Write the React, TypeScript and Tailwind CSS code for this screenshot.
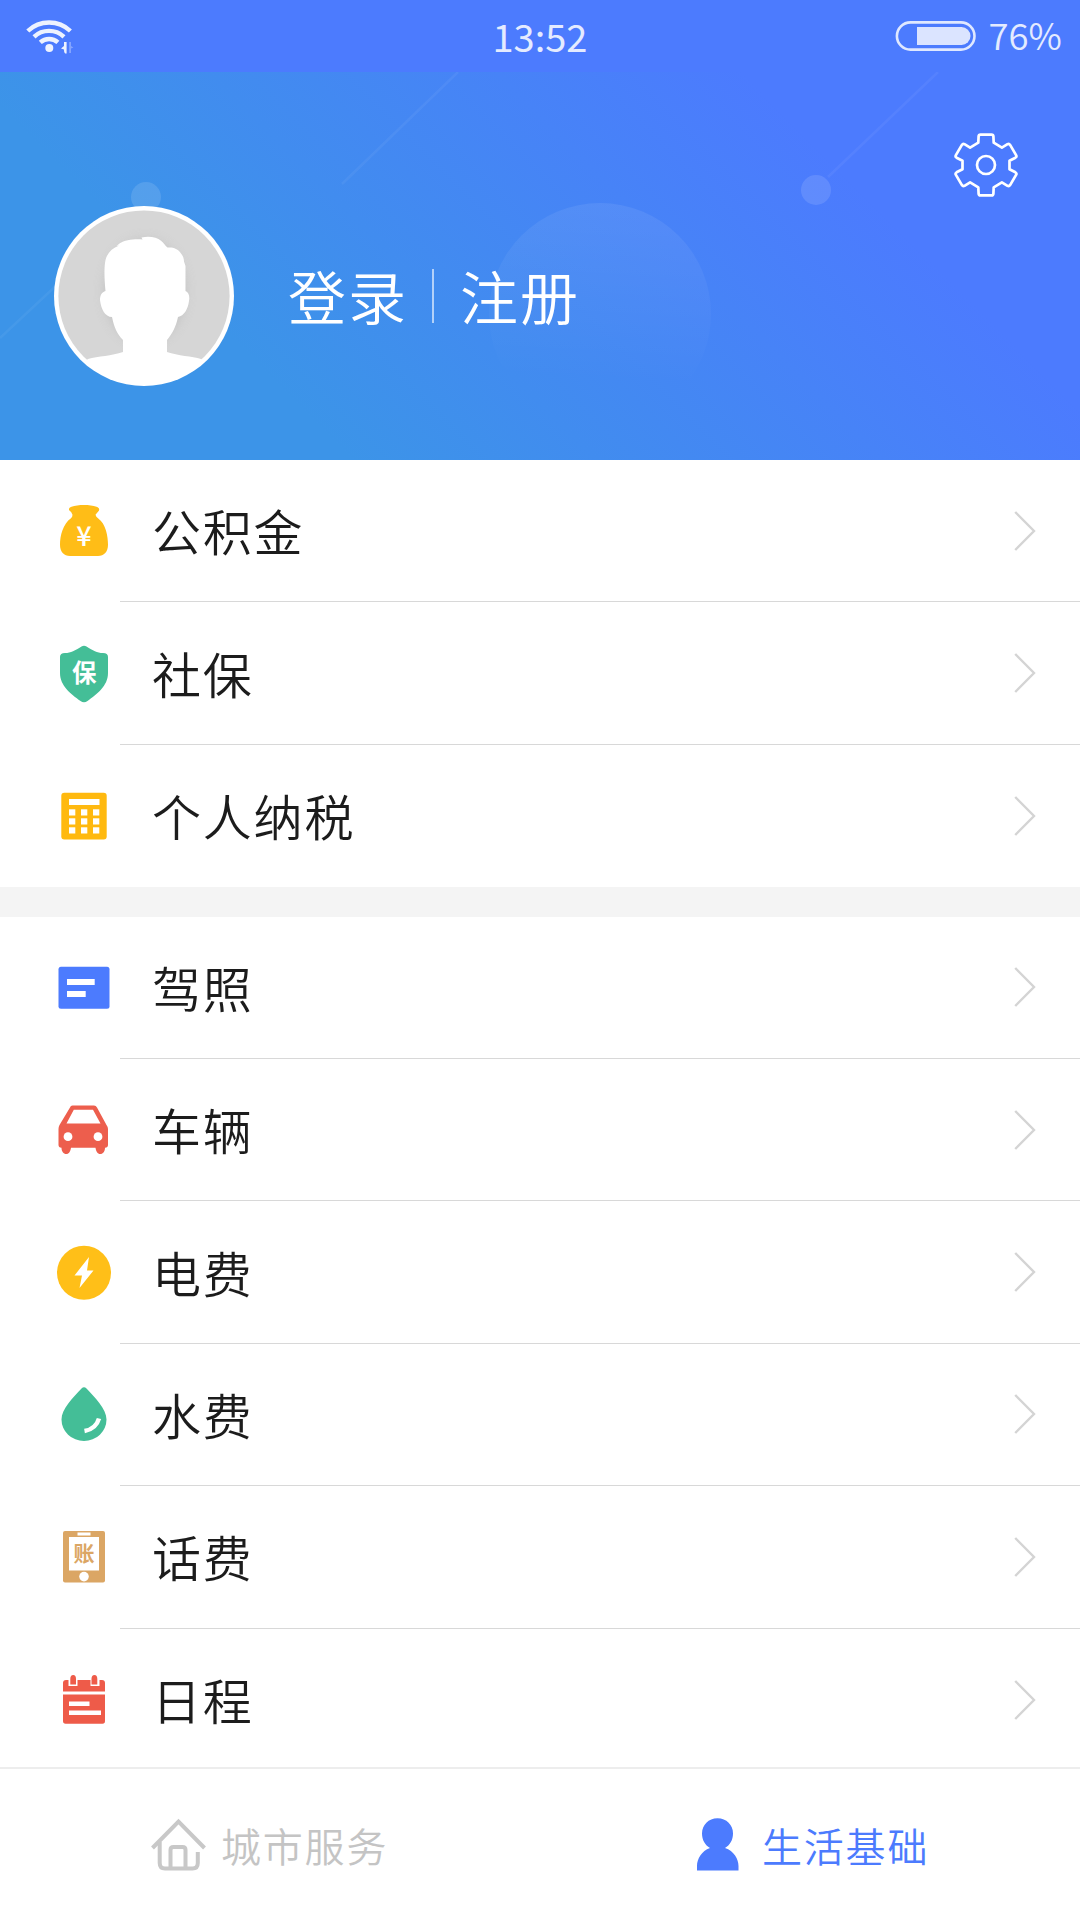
import React from "react";

interface MenuItem {
  label: string;
  icon: React.ReactNode;
}

function WifiIcon() {
  return (
    <svg width="50" height="36" viewBox="0 0 50 36" fill="none" className="opacity-90">
      <g stroke="white" strokeWidth="4.4">
        <path d="M1.8 13a31 31 0 0 1 42.6 0" />
        <path d="M8 18.8a22 22 0 0 1 30 0" />
        <path d="M14.3 24.4a13 13 0 0 1 17.6 0" />
      </g>
      <circle cx="23.3" cy="30" r="4" fill="white" />
      <path d="M35 30.5l3-2.5v-4h2.6v11.4h-1.4c-1-1-1.2-2-1.2-4z" fill="white" />
      <path d="M43.2 24h1.8v4l2.4 1.5-2.4 1V35h-1.8z" fill="white" opacity=".35" />
    </svg>
  );
}

function BatteryIcon() {
  return (
    <svg width="82" height="30" viewBox="0 0 82 30" fill="none">
      <rect x="1.9" y="1.4" width="77.6" height="27.2" rx="13.6" stroke="#dfe8ff" strokeWidth="2.6" />
      <path d="M22 6h44.5a9 9 0 0 1 0 18H22z" fill="#dbe4ff" />
    </svg>
  );
}

function GearIcon() {
  return (
    <svg width="66" height="66" viewBox="-33 -33 66 66" fill="none" stroke="white" strokeWidth="2.7" strokeLinejoin="round">
      <path d="M-5.5-30.4h11q1.8 0 1.9 1.8l.3 6.3 8.2 4.9 5.6-3.4q1.6-.8 2.6.7l6 10.2q.9 1.6-.7 2.6l-5.9 3v8.6l5.9 3q1.6 1 .7 2.6l-6 10.2q-1 1.5-2.6.7l-5.6-3.4-8.2 4.9-.3 6.3q-.1 1.8-1.9 1.8h-11q-1.8 0-1.9-1.8l-.3-6.3-8.2-4.9-5.6 3.4q-1.6.8-2.6-.7l-6-10.2q-.9-1.6.7-2.6l5.9-3v-8.6l-5.9-3q-1.6-1-.7-2.6l6-10.2q1-1.5 2.6-.7l5.6 3.4 8.2-4.9.3-6.3q.1-1.8 1.9-1.8z" />
      <circle r="9" />
    </svg>
  );
}

function HeroDecor() {
  return (
    <svg className="absolute inset-0" width="1080" height="388" viewBox="0 72 1080 388" fill="none">
      <defs>
        <linearGradient id="bubble" x1="0.5" y1="0" x2="0.45" y2="1">
          <stop offset="0" stopColor="white" stopOpacity=".075" />
          <stop offset=".8" stopColor="white" stopOpacity="0" />
        </linearGradient>
      </defs>
      <circle cx="600" cy="314" r="111" fill="url(#bubble)" />
      <circle cx="146" cy="197" r="15" fill="white" fillOpacity=".12" />
      <circle cx="816" cy="190" r="15" fill="white" fillOpacity=".12" />
      <g stroke="white" strokeOpacity=".05" strokeWidth="2.5">
        <path d="M828 177L938 72" />
        <path d="M342 184L458 72" />
        <path d="M0 338L60 282" />
      </g>
    </svg>
  );
}

function Avatar() {
  return (
    <svg width="180" height="180" viewBox="0 0 180 180">
      <defs>
        <clipPath id="avatarClip">
          <circle cx="90" cy="90" r="88" />
        </clipPath>
        <filter id="softShadow" x="-20%" y="-20%" width="140%" height="140%">
          <feGaussianBlur stdDeviation="5" />
        </filter>
      </defs>
      <circle cx="90" cy="90" r="90" fill="white" />
      <circle cx="90" cy="90" r="85.6" fill="#d6d6d6" />
      <g clipPath="url(#avatarClip)">
        <ellipse cx="91" cy="85" rx="42" ry="53" fill="#bdbdbd" opacity=".6" filter="url(#softShadow)" />
        <path
          d="M62.5 40L65.5 37.5C71 34 80 32.8 88.5 33.5L87.5 31.5C95 29.8 103 31.2 107 34.7C110 37 111 39.5 113.5 41.5C119 41 124 42.5 127 47.5C129 50 130 52.5 130 55.5L131.5 60V85C134.5 86 136 90 135 95C134 103 130 110 124 111C122 121 118 128 113 134V146C124 150 138 150 147 153L180 180H0L34 153C44 150 58 150 69 146V134C63 128 60 121 58 111C51 111 47 103 46 94C46 89 48 86 51.5 85C50.5 75 50 64 51 57C52 48 57 43 65 39.5Z"
          fill="white"
        />
      </g>
    </svg>
  );
}

function MoneyBagIcon() {
  return (
    <svg width="54" height="60" viewBox="0 -1.8 54 60">
      <path
        d="M14 9C11 7 11.5 5 14.5 4C21 1.5 33 1.5 39.5 4C42.5 5 43 7 41 9L38.5 12Q39 14 41 15.5C49 21 51 34 51 42C51 49 47 53.3 41 53.3H13C7 53.3 3 49 3 42C3 33 6 21 14 15.5Q15.5 14 15.5 12Z"
        fill="#ffbd17"
      />
      <text x="27" y="43.5" textAnchor="middle" fontSize="27" fill="white" className="font-['Noto_Sans_CJK_SC',sans-serif] font-medium">
        ¥
      </text>
    </svg>
  );
}

function ShieldIcon() {
  return (
    <svg width="54" height="60" viewBox="0 0 54 60">
      <path d="M24.5 2.5Q27 1 29.5 2.5C36 6.5 40 9 46 9Q51 9 51 13V29C51 42 40 50 30.5 57Q27 59.5 23.5 57C14 50 3 42 3 29V13Q3 9 8 9C14 9 18 6.5 24.5 2.5Z" fill="#44be97" />
      <text x="27.3" y="38" textAnchor="middle" fontSize="24.5" fill="white" className="font-['Noto_Sans_CJK_SC',sans-serif] font-bold">
        保
      </text>
    </svg>
  );
}

function CalculatorIcon() {
  return (
    <svg width="54" height="60" viewBox="0 0 54 60">
      <rect x="4.3" y="6.8" width="45.4" height="46.8" rx="3" fill="#ffb90f" />
      <g fill="white">
        <rect x="12" y="13" width="30.5" height="6" />
        {[23.3, 32.3, 41.3].map((y) =>
          [12, 24, 36].map((x) => <rect key={`${x}-${y}`} x={x} y={y} width="6.3" height="6.2" />)
        )}
      </g>
    </svg>
  );
}

function LicenseIcon() {
  return (
    <svg width="54" height="60" viewBox="0 0 54 60">
      <rect x="1.5" y="8.7" width="51" height="42" rx="2.5" fill="#4c7bfe" />
      <path d="M10 21h27.7v6H10zM10 33h18.7v6H10z" fill="white" />
    </svg>
  );
}

function CarIcon() {
  return (
    <svg width="54" height="60" viewBox="0 0 54 60">
      <path
        fillRule="evenodd"
        fill="#ed5e4d"
        d="M13 7.5Q13.6 5.5 15.5 5.5H37Q39 5.5 40 7.5L49.5 25Q51 27 51 29V45Q51 47.5 48 47.7C48 51 46 54 43.3 54C40.5 54 39 51 38.5 47.7H14C13.5 51 12 54 9.3 54C6.5 54 4.5 51 4.5 47.7Q1.5 47.5 1.5 45V29Q1.5 27 2.5 25ZM16.8 9.7L9.5 23.5H43.5L36 9.7Z"
      />
      <circle cx="11" cy="36.7" r="4.4" fill="white" />
      <circle cx="41" cy="36.7" r="4.4" fill="white" />
    </svg>
  );
}

function PowerIcon() {
  return (
    <svg width="54" height="60" viewBox="0 0 54 60">
      <circle cx="27" cy="29.8" r="27" fill="#ffbf18" />
      <path d="M32 14L17.5 32.5H25L22.5 45L36.5 27.5H30Z" fill="white" />
    </svg>
  );
}

function WaterIcon() {
  return (
    <svg width="54" height="60" viewBox="0 0 54 60">
      <path d="M24.5 3.5Q27 1 29.5 3.5C38 12.5 49.5 24 49.5 34.5A22.5 21.5 0 0 1 4.5 34.5C4.5 24 16 12.5 24.5 3.5Z" fill="#44be97" />
      <path d="M42 33.5Q39 44 27.5 46" stroke="white" strokeWidth="4.5" fill="none" />
    </svg>
  );
}

function PhoneBillIcon() {
  return (
    <svg width="54" height="60" viewBox="0 0 54 60">
      <rect x="6" y="4" width="42" height="51.5" rx="2" fill="#dba664" />
      <rect x="20.5" y="5.5" width="13" height="3" fill="white" />
      <rect x="12" y="10" width="30" height="33.5" fill="white" />
      <circle cx="27" cy="49.6" r="4.8" fill="white" />
      <text x="27" y="34.3" textAnchor="middle" fontSize="21" fill="#dba664" className="font-['Noto_Sans_CJK_SC',sans-serif] font-bold">
        账
      </text>
    </svg>
  );
}

function CalendarIcon() {
  return (
    <svg width="54" height="60" viewBox="0 0 54 60">
      <path d="M6 21.5V13Q6 10 9 10H11.5V16H20.5V10H33.5V16H42.5V10H45Q48 10 48 13V21.5Z" fill="#ee5b49" />
      <path d="M13.3 14.5V9Q13.3 5 16.2 5Q19 5 19 9V14.5ZM34.5 14.5V9Q34.5 5 37.5 5Q40.3 5 40.3 9V14.5Z" fill="#ee5b49" />
      <path d="M6 24.5H48V51Q48 53.7 45.5 53.7H8.5Q6 53.7 6 51Z" fill="#ee5b49" />
      <path d="M12 31.5h20.5v4.5H12zM12 40.5h32v4.5H12z" fill="white" />
    </svg>
  );
}

function HomeIcon() {
  return (
    <svg width="56" height="54" viewBox="0 0 56 54" fill="none" stroke="#c8c8c8" strokeWidth="4">
      <path d="M2.5 30L28.5 3.5L54.5 30" />
      <path d="M9.7 24V45Q9.7 50.5 15 50.5H42.5Q47.8 50.5 47.8 45V34" />
      <path d="M20.5 50V32Q20.5 29 23.5 29H32.5Q35.5 29 35.5 32V50" />
    </svg>
  );
}

function PersonIcon() {
  return (
    <svg width="42" height="53" viewBox="0 0 42 53" fill="#4c7bfe">
      <path d="M20.5.3C29.5.3 36 7 36 15.5C36 22 33 27 28 30C37 33 41.5 41 41.5 48V52.5H0V48C0 41 4.5 33 13 30C8 27 5 22 5 15.5C5 7 11.5.3 20.5.3Z" />
    </svg>
  );
}

const accountItems: MenuItem[] = [
  { label: "公积金", icon: <MoneyBagIcon /> },
  { label: "社保", icon: <ShieldIcon /> },
  { label: "个人纳税", icon: <CalculatorIcon /> },
];

const lifeItems: MenuItem[] = [
  { label: "驾照", icon: <LicenseIcon /> },
  { label: "车辆", icon: <CarIcon /> },
  { label: "电费", icon: <PowerIcon /> },
  { label: "水费", icon: <WaterIcon /> },
  { label: "话费", icon: <PhoneBillIcon /> },
  { label: "日程", icon: <CalendarIcon /> },
];

function MenuList({ items }: { items: MenuItem[] }) {
  return (
    <ul>
      {items.map((item, index) => (
        <li key={item.label} className="flex h-[142.4px] pl-[57px]">
          <div className="flex w-[63px] shrink-0 items-center">
            <span className="block w-[54px]">{item.icon}</span>
          </div>
          <div
            className={`flex flex-1 items-center justify-between pl-8 pr-11 ${
              index < items.length - 1 ? "border-b border-[#d8d8d8]" : ""
            }`}
          >
            <span className="pb-[2px] text-[49px] leading-none tracking-[1.8px] text-[#1c1c1c]">{item.label}</span>
            <svg width="22" height="40" viewBox="0 0 22 40" fill="none" stroke="#d4d4d4" strokeWidth="2.4">
              <path d="M1.2 1L20 20L1.2 39" />
            </svg>
          </div>
        </li>
      ))}
    </ul>
  );
}

export default function App() {
  return (
    <div className="flex h-[1920px] w-[1080px] flex-col overflow-hidden bg-white font-['Noto_Sans_CJK_SC',sans-serif] font-[350]">
      <div className="flex h-[72px] shrink-0 items-center bg-[#4c7bfe] pl-[26px] pr-[18px] text-[#e4ebff]">
        <div className="flex-1">
          <WifiIcon />
        </div>
        <span className="mr-2 text-[38px] font-normal leading-none">13:52</span>
        <div className="flex flex-1 items-center justify-end gap-3">
          <BatteryIcon />
          <span className="pb-px text-[36.5px] leading-none">76%</span>
        </div>
      </div>

      <header className="relative flex h-[388px] shrink-0 bg-[linear-gradient(45deg,#3c94e8_24%,#4c7bfe_77%)] pl-[54px] pr-[61px]">
        <HeroDecor />
        <div className="relative flex flex-1 items-center pt-[59px]">
          <Avatar />
          <div className="ml-[54px] flex items-center text-[58px] leading-none text-white">
            <span className="pb-px tracking-[2px]">登录</span>
            <span className="ml-[24px] mr-[26px] h-[54px] w-0.5 bg-white/60" />
            <span className="pb-px tracking-[2px]">注册</span>
          </div>
        </div>
        <button className="relative mt-[60px] self-start">
          <GearIcon />
        </button>
      </header>

      <main className="min-h-0 flex-1 overflow-hidden">
        <MenuList items={accountItems} />
        <div className="h-[29.4px] bg-[#f4f4f4]" />
        <MenuList items={lifeItems} />
      </main>

      <nav className="flex h-[153px] shrink-0 border-t-2 border-[#ededed] bg-white text-[40px] leading-none tracking-[1.8px]">
        <div className="flex w-1/2 items-center pl-[150px]">
          <HomeIcon />
          <span className="ml-[15px] text-[#c4c4c4]">城市服务</span>
        </div>
        <div className="flex w-1/2 items-center pl-[157px]">
          <PersonIcon />
          <span className="ml-[23px] text-[#4c7bfe]">生活基础</span>
        </div>
      </nav>
    </div>
  );
}
